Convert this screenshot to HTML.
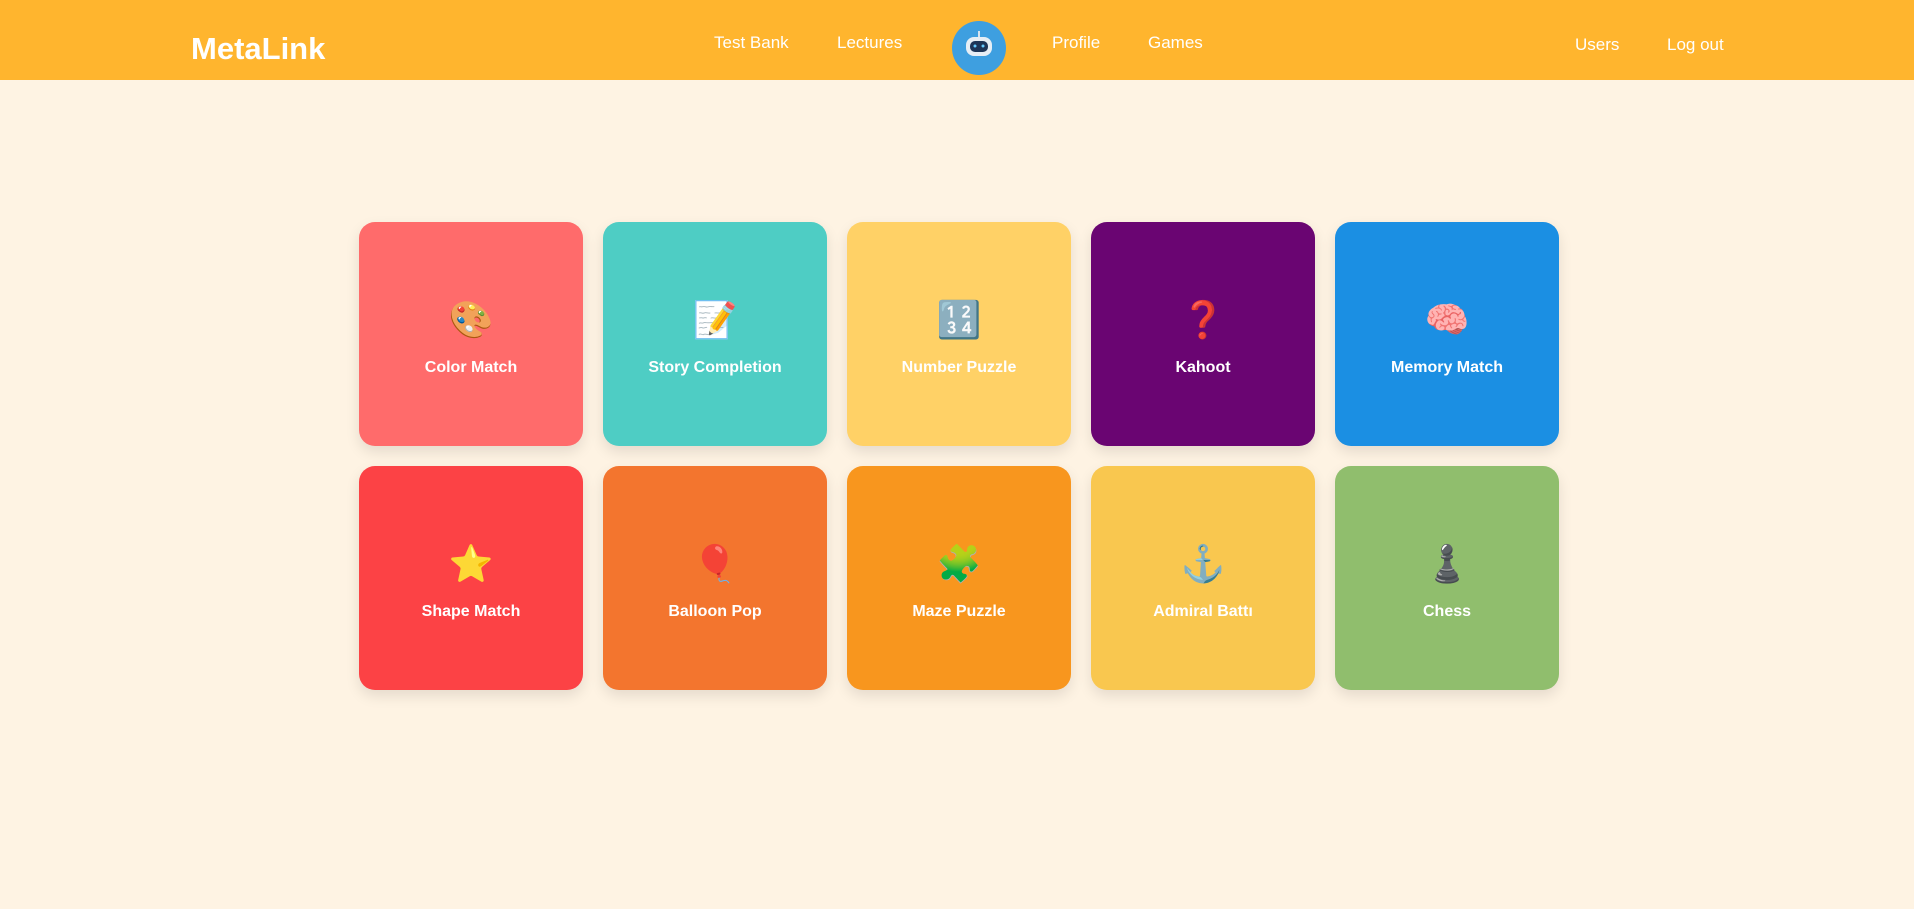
<!DOCTYPE html>
<html><head><meta charset="utf-8"><style>
body{margin:0;width:1914px;height:909px;background:#FEF3E3;font-family:"Liberation Sans",sans-serif;overflow:hidden;position:relative}
.hdr{position:absolute;left:0;top:0;width:1914px;height:80px;background:#FFB52E}
.hdr span{position:absolute;color:#fff;font-size:17px;line-height:20px}
.logo{left:191px;top:32px;font-size:31px!important;font-weight:bold;line-height:34px!important}
.bot{position:absolute;left:952px;top:21px;width:54px;height:54px;border-radius:50%;background:#3E9FE0}
.card{position:absolute;width:224px;height:224px;border-radius:16px;box-shadow:0 6px 14px rgba(0,0,0,.1);color:#fff;text-align:center}
.card .i{position:absolute;left:0;right:0;top:76px;font-size:36px;line-height:44px;font-family:"Noto Color Emoji","DejaVu Sans",sans-serif}
.card .t{position:absolute;left:0;right:0;top:136px;font-size:16px;font-weight:bold;line-height:20px}
</style></head><body>
<div class="hdr">
<span class="logo">MetaLink</span>
<span style="left:714px;top:33px">Test Bank</span>
<span style="left:837px;top:33px">Lectures</span>
<div class="bot"><svg width="54" height="54" viewBox="0 0 54 54"><line x1="27" y1="10" x2="27" y2="16" stroke="#d8e4ee" stroke-width="2"/><rect x="14" y="16" width="26" height="19" rx="8" fill="#e6eef5"/><rect x="18" y="20" width="18" height="11" rx="5" fill="#1d3557"/><circle cx="23" cy="25" r="1.5" fill="#6cf"/><circle cx="31" cy="25" r="1.5" fill="#6cf"/></svg></div>
<span style="left:1052px;top:33px">Profile</span>
<span style="left:1148px;top:33px">Games</span>
<span style="left:1575px;top:35px">Users</span>
<span style="left:1667px;top:35px">Log out</span>
</div>
<div class="card" style="left:359px;top:222px;background:#FF6B6B"><div class="i">🎨</div><div class="t">Color Match</div></div>
<div class="card" style="left:603px;top:222px;background:#4ECDC4"><div class="i">📝</div><div class="t">Story Completion</div></div>
<div class="card" style="left:847px;top:222px;background:#FFD166"><div class="i">🔢</div><div class="t">Number Puzzle</div></div>
<div class="card" style="left:1091px;top:222px;background:#6A0572"><div class="i">❓</div><div class="t">Kahoot</div></div>
<div class="card" style="left:1335px;top:222px;background:#1B8FE3"><div class="i">🧠</div><div class="t">Memory Match</div></div>
<div class="card" style="left:359px;top:466px;background:#FC4245"><div class="i">⭐</div><div class="t">Shape Match</div></div>
<div class="card" style="left:603px;top:466px;background:#F3752E"><div class="i">🎈</div><div class="t">Balloon Pop</div></div>
<div class="card" style="left:847px;top:466px;background:#F8961E"><div class="i">🧩</div><div class="t">Maze Puzzle</div></div>
<div class="card" style="left:1091px;top:466px;background:#F9C74F"><div class="i">⚓</div><div class="t">Admiral Battı</div></div>
<div class="card" style="left:1335px;top:466px;background:#90BE6D"><div class="i">♟</div><div class="t">Chess</div></div>
</body></html>
